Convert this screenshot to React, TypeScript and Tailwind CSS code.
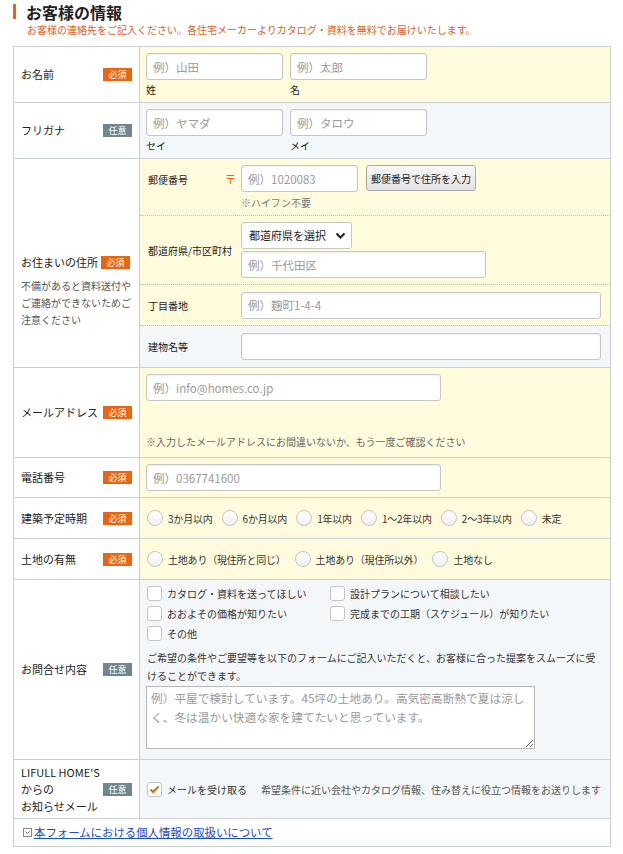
import React from "react";

const FONT = { fontFamily: '"Noto Sans CJK JP", "Noto Sans", sans-serif' };

function Badge({ req }: { req: boolean }) {
  return (
    <span
      className={
        req
          ? "inline-flex items-center justify-center w-[29px] h-[13px] shrink-0 bg-[#e8660f] text-white text-[9px] leading-none"
          : "inline-flex items-center justify-center w-[29px] h-[13px] shrink-0 bg-[#6f858f] text-white text-[9px] leading-none"
      }
    >
      {req ? "必須" : "任意"}
    </span>
  );
}

function TextInput({ ph, w }: { ph: string; w: string }) {
  return (
    <input
      placeholder={ph}
      className={`${w} h-[27px] bg-white border border-[#c6c6c6] rounded-[3px] px-[6px] text-[11.5px] text-[#333] placeholder:text-[#9a9a9a] shadow-[inset_0_1px_2px_rgba(0,0,0,0.08)] outline-none`}
    />
  );
}

function Radio({ label }: { label: string }) {
  return (
    <span className="flex items-center mr-[9px]">
      <span className="w-[16px] h-[16px] rounded-full border border-[#c4c4c4] bg-gradient-to-b from-white to-[#f0f0f0] mr-[5px] shrink-0" />
      <span className="text-[10px] text-[#333] tracking-[-0.2px]">{label}</span>
    </span>
  );
}

function Check({ label, w }: { label: string; w?: string }) {
  return (
    <span className={`flex items-center ${w ?? ""}`}>
      <span className="w-[15px] h-[15px] rounded-[3px] border border-[#c4c4c4] bg-white mr-[5px] shrink-0" />
      <span className="text-[10px] text-[#333]">{label}</span>
    </span>
  );
}

function LabelCell({ children, className }: { children: React.ReactNode; className?: string }) {
  return (
    <div
      className={`w-[126px] shrink-0 border-r border-[#c9d1d5] bg-white flex items-center justify-between pl-[7px] pr-[7px] text-[11px] text-[#222] ${className ?? ""}`}
    >
      {children}
    </div>
  );
}

export default function App() {
  return (
    <div className="w-[623px] h-[854px] bg-white text-[#222] overflow-hidden" style={FONT}>
      {/* Header */}
      <div className="flex items-center pl-[13px] pt-[2px] h-[21px]">
        <span className="w-[3px] h-[15px] bg-[#e8660f] mr-[10px]" />
        <span className="text-[16px] font-bold leading-none text-[#222]">お客様の情報</span>
      </div>
      <div className="pl-[27px] mt-[3px] h-[22px] text-[10px] text-[#e0601a] leading-[12px]">
        お客様の連絡先をご記入ください。各住宅メーカーよりカタログ・資料を無料でお届けいたします。
      </div>

      {/* Table */}
      <div className="ml-[13px] w-[598px] border border-[#c9d1d5]">
        {/* お名前 */}
        <div className="flex h-[56px] border-b border-[#c9d1d5]">
          <LabelCell>
            <span>お名前</span>
            <Badge req />
          </LabelCell>
          <div className="flex-1 bg-[#fffbdc] pl-[6px] pt-[6px]">
            <div className="flex gap-[7px]">
              <TextInput ph="例）山田" w="w-[137px]" />
              <TextInput ph="例）太郎" w="w-[137px]" />
            </div>
            <div className="flex text-[10px] mt-[3px] leading-[14px]">
              <span className="w-[144px]">姓</span>
              <span>名</span>
            </div>
          </div>
        </div>

        {/* フリガナ */}
        <div className="flex h-[56px] border-b border-[#c9d1d5]">
          <LabelCell>
            <span>フリガナ</span>
            <Badge req={false} />
          </LabelCell>
          <div className="flex-1 bg-[#f4f7f9] pl-[6px] pt-[6px]">
            <div className="flex gap-[7px]">
              <TextInput ph="例）ヤマダ" w="w-[137px]" />
              <TextInput ph="例）タロウ" w="w-[137px]" />
            </div>
            <div className="flex text-[10px] mt-[3px] leading-[14px]">
              <span className="w-[144px]">セイ</span>
              <span>メイ</span>
            </div>
          </div>
        </div>

        {/* 住所 */}
        <div className="flex h-[209px] border-b border-[#c9d1d5]">
          <div className="w-[126px] shrink-0 border-r border-[#c9d1d5] bg-white flex flex-col justify-center pl-[7px] pr-[6px] pt-[56px]">
            <div className="flex items-center text-[11px]">
              <span className="mr-[3px]">お住まいの住所</span>
              <Badge req />
            </div>
            <div className="mt-[7px] text-[10px] leading-[17px] text-[#555]">
              不備があると資料送付やご連絡ができないためご注意ください
            </div>
          </div>
          <div className="flex-1 flex flex-col">
            {/* 郵便番号 */}
            <div className="h-[57px] bg-[#fffbdc] border-b border-dotted border-[#bdbdbd] flex">
              <div className="w-[101px] shrink-0 flex items-start justify-between pl-[8px] pr-[5px] pt-[13px] text-[10px]">
                <span>郵便番号</span>
                <span className="text-[#e8660f] text-[11px] leading-[14px]">〒</span>
              </div>
              <div className="pt-[6px]">
                <div className="flex gap-[8px]">
                  <TextInput ph="例）1020083" w="w-[117px]" />
                  <button className="h-[26px] px-[4px] text-[10px] text-[#222] border border-[#a9a9a9] rounded-[3px] bg-gradient-to-b from-[#f8f8f8] to-[#e2e2e2]">
                    郵便番号で住所を入力
                  </button>
                </div>
                <div className="text-[10px] text-[#777] mt-[3px]">※ハイフン不要</div>
              </div>
            </div>
            {/* 都道府県 */}
            <div className="h-[69px] bg-[#fffbdc] border-b border-dotted border-[#bdbdbd] flex items-center">
              <div className="w-[101px] shrink-0 pl-[8px] text-[10px]">都道府県/市区町村</div>
              <div className="flex flex-col gap-[2px]">
                <div className="w-[111px] h-[27px] bg-white border border-[#c6c6c6] rounded-[3px] flex items-center justify-between pl-[7px] pr-[5px] text-[11px] text-[#222]">
                  <span>都道府県を選択</span>
                  <svg width="11" height="8" viewBox="0 0 11 8">
                    <path d="M1.5 1.5 L5.5 5.5 L9.5 1.5" fill="none" stroke="#222" strokeWidth="2" />
                  </svg>
                </div>
                <TextInput ph="例）千代田区" w="w-[245px]" />
              </div>
            </div>
            {/* 丁目番地 */}
            <div className="h-[41px] bg-[#fffbdc] border-b border-dotted border-[#bdbdbd] flex items-center">
              <div className="w-[101px] shrink-0 pl-[8px] text-[10px]">丁目番地</div>
              <TextInput ph="例）麹町1-4-4" w="w-[360px]" />
            </div>
            {/* 建物名等 */}
            <div className="h-[41px] bg-[#f4f7f9] flex items-center">
              <div className="w-[101px] shrink-0 pl-[8px] text-[10px]">建物名等</div>
              <TextInput ph="" w="w-[360px]" />
            </div>
          </div>
        </div>

        {/* メール */}
        <div className="flex h-[90px] border-b border-[#c9d1d5]">
          <LabelCell>
            <span>メールアドレス</span>
            <Badge req />
          </LabelCell>
          <div className="flex-1 bg-[#fffbdc] pl-[6px] pt-[6px] flex flex-col">
            <TextInput ph="例）info@homes.co.jp" w="w-[295px]" />
            <div className="mt-auto mb-[8px] text-[10px] text-[#666]">
              ※入力したメールアドレスにお間違いないか、もう一度ご確認ください
            </div>
          </div>
        </div>

        {/* 電話番号 */}
        <div className="flex h-[40px] border-b border-[#c9d1d5]">
          <LabelCell>
            <span>電話番号</span>
            <Badge req />
          </LabelCell>
          <div className="flex-1 bg-[#fffbdc] pl-[6px] flex items-center">
            <TextInput ph="例）0367741600" w="w-[295px]" />
          </div>
        </div>

        {/* 建築予定時期 */}
        <div className="flex h-[41px] border-b border-[#c9d1d5]">
          <LabelCell>
            <span>建築予定時期</span>
            <Badge req />
          </LabelCell>
          <div className="flex-1 bg-[#fffbdc] pl-[7px] flex items-center">
            <Radio label="3か月以内" />
            <Radio label="6か月以内" />
            <Radio label="1年以内" />
            <Radio label="1〜2年以内" />
            <Radio label="2〜3年以内" />
            <Radio label="未定" />
          </div>
        </div>

        {/* 土地の有無 */}
        <div className="flex h-[41px] border-b border-[#c9d1d5]">
          <LabelCell>
            <span>土地の有無</span>
            <Badge req />
          </LabelCell>
          <div className="flex-1 bg-[#fffbdc] pl-[7px] flex items-center">
            <Radio label="土地あり（現住所と同じ）" />
            <Radio label="土地あり（現住所以外）" />
            <Radio label="土地なし" />
          </div>
        </div>

        {/* お問合せ内容 */}
        <div className="flex h-[180px] border-b border-[#c9d1d5]">
          <LabelCell>
            <span>お問合せ内容</span>
            <Badge req={false} />
          </LabelCell>
          <div className="flex-1 bg-[#f4f7f9] pl-[7px] pr-[8px] pt-[6px]">
            <div className="flex flex-col gap-[5px]">
              <div className="flex">
                <Check label="カタログ・資料を送ってほしい" w="w-[183px]" />
                <Check label="設計プランについて相談したい" />
              </div>
              <div className="flex">
                <Check label="おおよその価格が知りたい" w="w-[183px]" />
                <Check label="完成までの工期（スケジュール）が知りたい" />
              </div>
              <Check label="その他" />
            </div>
            <p className="mt-[8px] text-[10px] leading-[18px] text-[#333]">
              ご希望の条件やご要望等を以下のフォームにご記入いただくと、お客様に合った提案をスムーズに受けることができます。
            </p>
            <textarea
              placeholder="例）平屋で検討しています。45坪の土地あり。高気密高断熱で夏は涼しく、冬は温かい快適な家を建てたいと思っています。"
              className="block mt-[1px] ml-[-1px] w-[389px] h-[63px] bg-white border border-[#b8b8b8] px-[4px] py-[1px] text-[11.7px] leading-[19px] placeholder:text-[#9a9a9a] outline-none"
            />
          </div>
        </div>

        {/* LIFULL */}
        <div className="flex h-[59px] border-b border-[#c9d1d5]">
          <LabelCell>
            <span className="leading-[17px]">
              LIFULL HOME&#39;S
              <br />
              からの
              <br />
              お知らせメール
            </span>
            <Badge req={false} />
          </LabelCell>
          <div className="flex-1 bg-[#f4f7f9] pl-[7px] flex items-center">
            <span className="w-[15px] h-[15px] rounded-[3px] border border-[#c4c4c4] bg-white mr-[5px] flex items-center justify-center">
              <svg width="11" height="9" viewBox="0 0 11 9">
                <path d="M1.5 4.5 L4.2 7 L9.5 1.5" fill="none" stroke="#e8660f" strokeWidth="2" />
              </svg>
            </span>
            <span className="text-[10px] text-[#333] mr-[14px]">メールを受け取る</span>
            <span className="text-[10px] text-[#555]">
              希望条件に近い会社やカタログ情報、住み替えに役立つ情報をお送りします
            </span>
          </div>
        </div>

        {/* Footer link */}
        <div className="h-[27px] flex items-center pl-[9px] bg-white">
          <span className="w-[9px] h-[9px] border border-[#888] mr-[2px] flex items-center justify-center">
            <svg width="7" height="7" viewBox="0 0 7 7">
              <path d="M1.5 2.5 L3.5 4.5 L5.5 2.5" fill="none" stroke="#666" strokeWidth="1" />
            </svg>
          </span>
          <a href="#" className="text-[11.4px] text-[#1a4ec4] underline">
            本フォームにおける個人情報の取扱いについて
          </a>
        </div>
      </div>
    </div>
  );
}
